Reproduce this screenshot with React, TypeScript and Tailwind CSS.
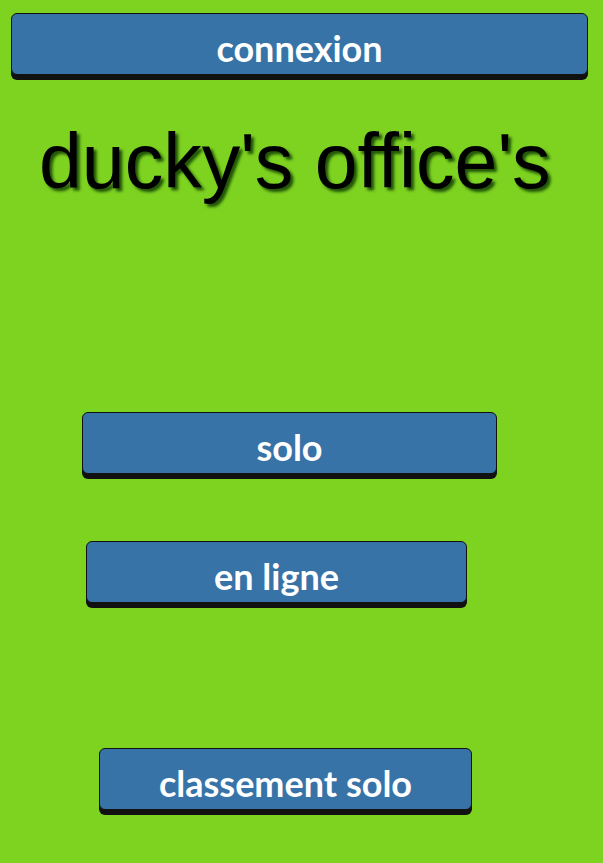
const btn =
  "flex h-[62px] items-center justify-center rounded-[6px] border border-[#111] bg-[#3873a8] pt-[7px] text-[36px] font-bold text-white shadow-[0_5px_0_#111] [font-family:Lato,'Open_Sans',sans-serif]";

export default function App() {
  return (
    <div className="flex min-h-[863px] w-full flex-col bg-[#7ed320]">
      <button className={`${btn} ml-[11px] mr-[15px] mt-[13px]`}>connexion</button>

      <h1 className="mt-[44px] pl-[39px] text-[77px] leading-[85px] text-black [font-family:'Liberation_Sans',Arial,sans-serif] [text-shadow:3px_3px_3px_rgba(0,40,0,0.75)]">
        ducky's office's
      </h1>

      <button className={`${btn} ml-[82px] mt-[208px] w-[415px]`}>solo</button>
      <button className={`${btn} ml-[86px] mt-[67px] w-[381px]`}>en ligne</button>
      <button className={`${btn} ml-[99px] mt-[145px] w-[373px]`}>classement solo</button>
    </div>
  );
}
